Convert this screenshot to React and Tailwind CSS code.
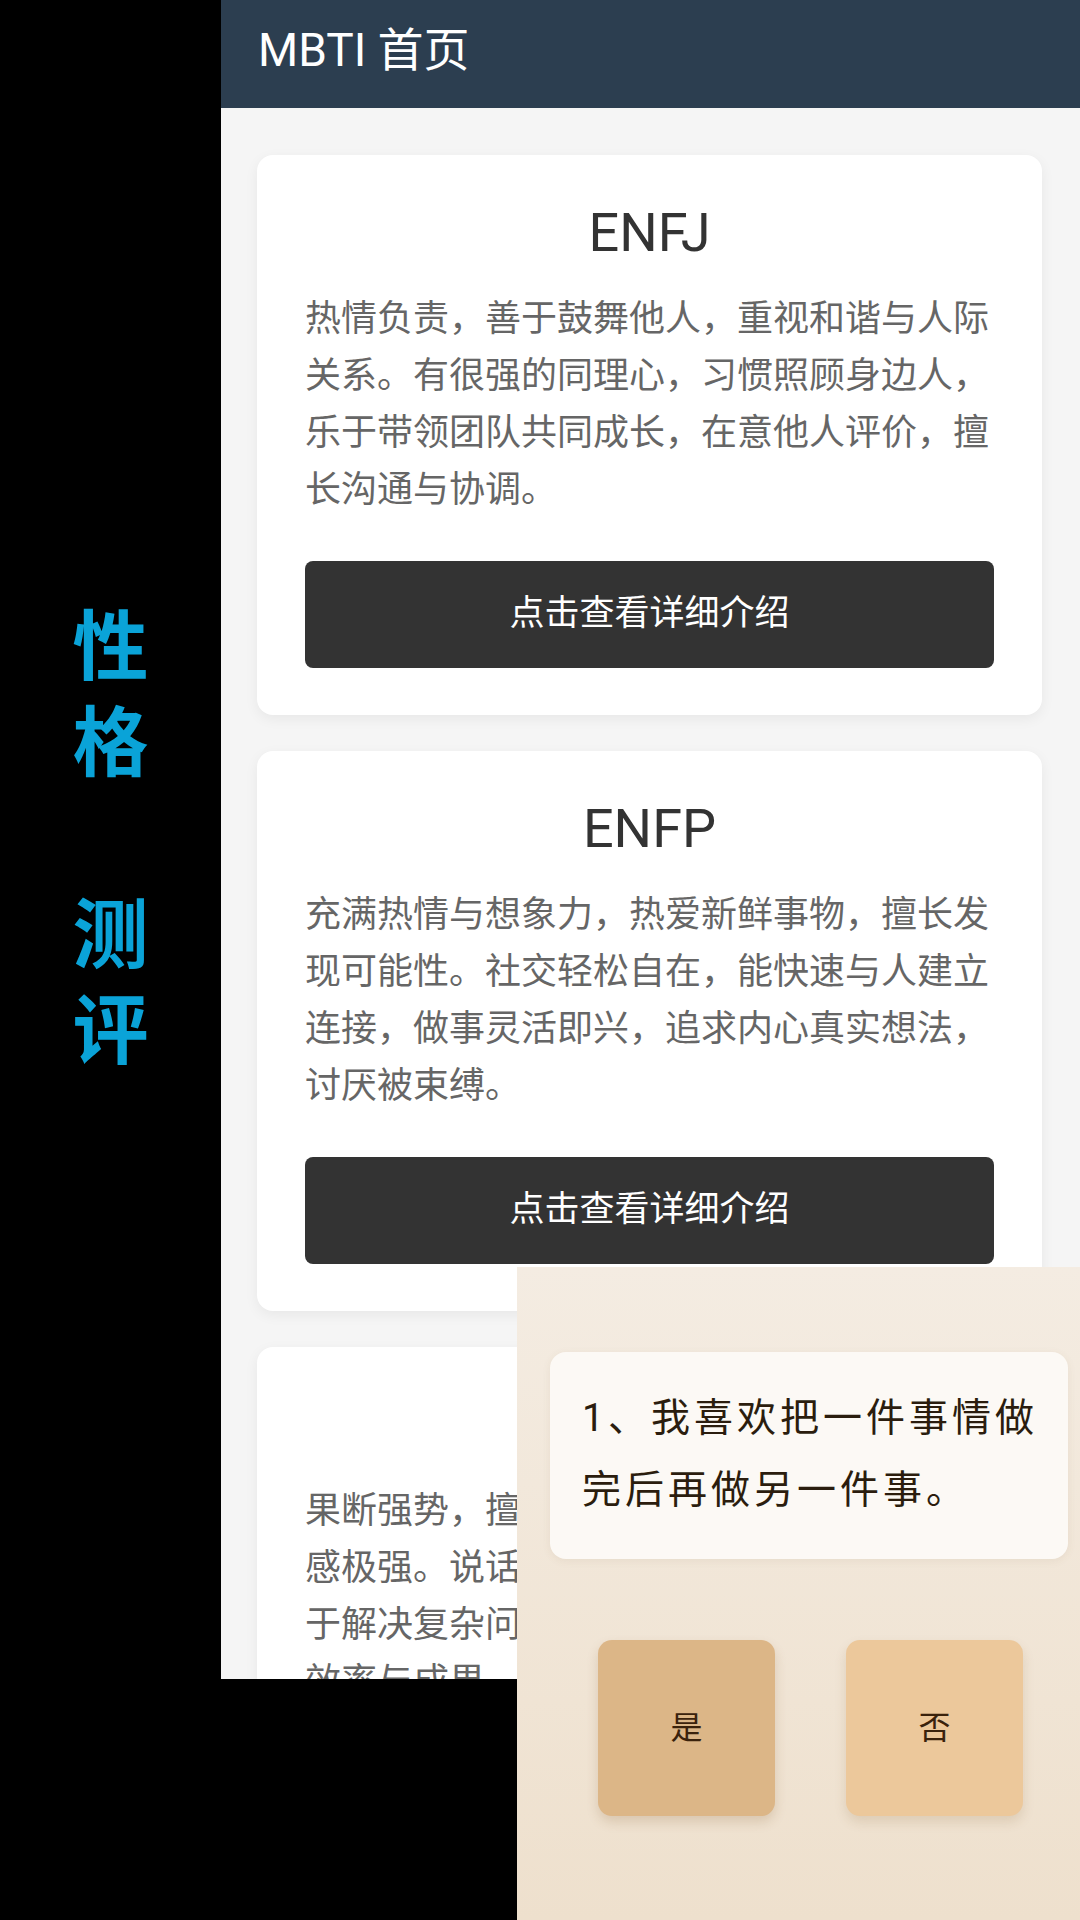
import React from "react";

const cards = [
  {
    type: "ENFJ",
    desc: "热情负责，善于鼓舞他人，重视和谐与人际关系。有很强的同理心，习惯照顾身边人，乐于带领团队共同成长，在意他人评价，擅长沟通与协调。",
  },
  {
    type: "ENFP",
    desc: "充满热情与想象力，热爱新鲜事物，擅长发现可能性。社交轻松自在，能快速与人建立连接，做事灵活即兴，追求内心真实想法，讨厌被束缚。",
  },
  {
    type: "ENTJ",
    desc: "果断强势，擅长统筹规划与组织管理，责任感极强。说话直接而干脆，行动力十足，善于解决复杂问题，注重逻辑与结果，追求高效率与成果。",
  },
];

const TypeCard = ({ type, desc }) => (
  <div className="shrink-0 bg-white rounded-[16px] shadow-[0_4px_14px_rgba(0,0,0,0.06)] px-[48px] pt-[44px] pb-[47px]">
    <h2 className="text-center text-[54px] leading-[68px] text-[#333] font-normal">
      {type}
    </h2>
    <p className="mt-[24px] text-[36px] leading-[57px] text-[#666]">{desc}</p>
    <button className="mt-[42px] w-full h-[107px] rounded-[8px] bg-[#333] text-white text-[35px]">
      点击查看详细介绍
    </button>
  </div>
);

const App = () => {
  return (
    <div
      className="relative w-[1080px] h-[1920px] bg-black overflow-hidden"
      style={{ fontFamily: "Roboto, 'Noto Sans CJK SC', sans-serif" }}
    >
      {/* Screenshot area */}
      <div className="flex h-[1679px]">
        {/* Side caption */}
        <div className="w-[221px] shrink-0 flex items-center justify-center">
          <div className="flex flex-col items-center text-[76px] leading-[96px] font-bold text-[#0aa3d8]">
            <span>性</span>
            <span>格</span>
            <span>&nbsp;</span>
            <span>测</span>
            <span>评</span>
          </div>
        </div>

        {/* Phone screen */}
        <div className="flex-1 flex flex-col bg-[#f5f5f5] overflow-hidden">
          <div className="h-[108px] shrink-0 bg-[#2c3e50] px-[37px] pb-[8px] flex items-center">
            <h1 className="text-[46px] text-white font-normal">MBTI 首页</h1>
          </div>
          <div className="flex flex-col gap-[36px] pt-[47px] pl-[36px] pr-[38px]">
            {cards.map((c) => (
              <TypeCard key={c.type} {...c} />
            ))}
          </div>
        </div>
      </div>

      {/* Quiz overlay */}
      <div className="absolute left-[517px] top-[1267px] right-0 bottom-0 bg-gradient-to-b from-[#f4ece2] to-[#eee0cd] pt-[85px] pl-[33px] pr-[12px]">
        <div className="rounded-[16px] bg-[#fcf9f5] shadow-[0_2px_8px_rgba(120,90,50,0.08)] pl-[32px] pr-[12px] pt-[30px] pb-[33px]">
          <p className="text-[39px] leading-[72px] tracking-[4px] text-[#2b1d0e]">
            1、我喜欢把一件事情做完后再做另一件事。
          </p>
        </div>
        <div className="flex gap-[71px] mt-[81px] pl-[48px]">
          <button className="w-[177px] h-[176px] rounded-[14px] bg-[#dcb687] text-[#3a220c] text-[32px] shadow-[0_6px_12px_rgba(120,80,30,0.18)]">
            是
          </button>
          <button className="w-[177px] h-[176px] rounded-[14px] bg-[#ecc89b] text-[#3a220c] text-[32px] shadow-[0_6px_12px_rgba(120,80,30,0.15)]">
            否
          </button>
        </div>
      </div>
    </div>
  );
};

export default App;
